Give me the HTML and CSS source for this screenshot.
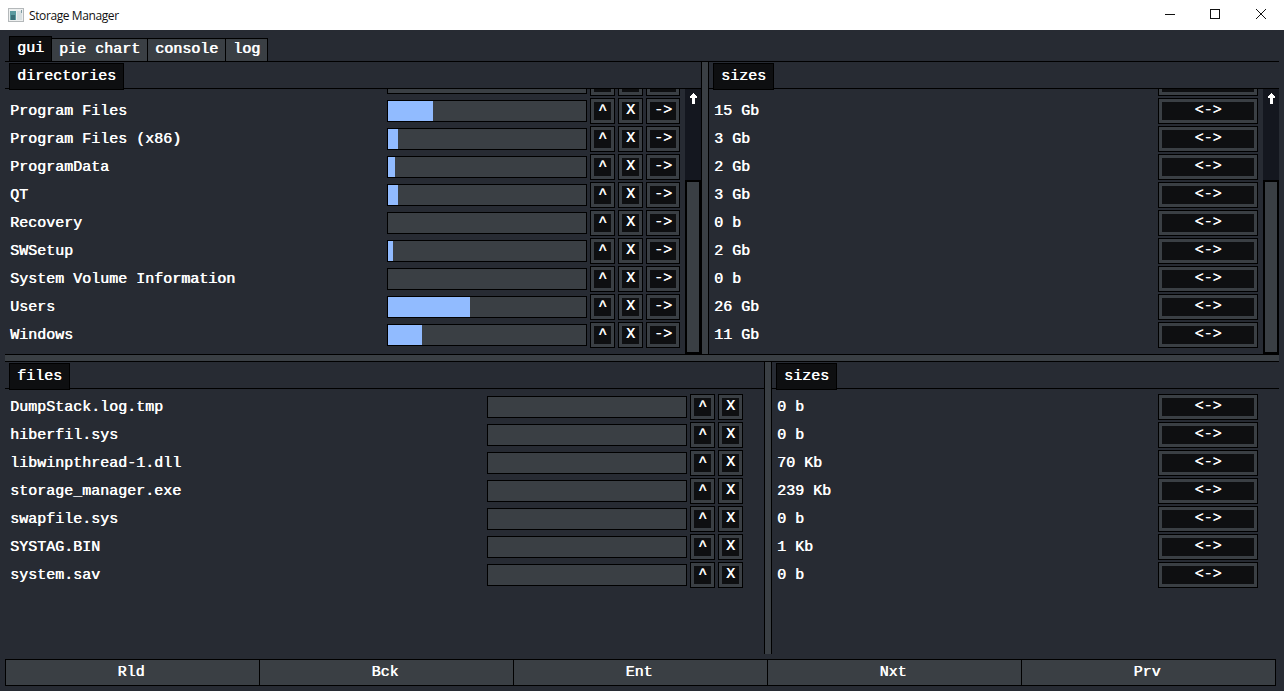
FILE: index.html
```html
<!DOCTYPE html>
<html lang="en">
<head>
<meta charset="UTF-8" />
<title>Storage Manager</title>
<link rel="stylesheet" href="styles.css">
</head>
<body>

<div class="titlebar">
  <svg class="app-icon" width="16" height="14" viewBox="0 0 16 14">
    <rect x="0.5" y="0.5" width="15" height="13" fill="#eef0f0" stroke="#b4b8ba"/>
    <rect x="2" y="3" width="6" height="9" fill="#5b9aa0"/>
    <rect x="3" y="7" width="4" height="5" fill="#3a6f78"/>
    <rect x="9" y="3" width="5" height="9" fill="#d8e0e2"/>
    <rect x="13" y="2" width="1" height="3" fill="#7f9ca2"/>
  </svg>
  <span class="title">Storage Manager</span>
  <div class="winctl">
    <svg width="46" height="30" viewBox="0 0 46 30"><path d="M19 14.5h10" stroke="#111" fill="none"/></svg>
    <svg width="46" height="30" viewBox="0 0 46 30"><rect x="18.5" y="9.5" width="9" height="9" stroke="#111" fill="none"/></svg>
    <svg width="46" height="30" viewBox="0 0 46 30"><path d="M18 9l10 10M28 9l-10 10" stroke="#111" fill="none"/></svg>
  </div>
</div>

<div class="app">
  <div class="tabbar">
    <div class="tab active">gui</div>
    <div class="tab">pie chart</div>
    <div class="tab">console</div>
    <div class="tab">log</div>
  </div>

  <div class="split">
    <div class="pane dirs">
      <div class="pane-head"><div class="pane-tab">directories</div></div>
      <div class="pane-body">
        <div class="list end">
          <div class="row"><span class="name">PerfLogs</span><div class="bar"></div><button class="btn">^</button><button class="btn">X</button><button class="btn wide">-&gt;</button></div>
          <div class="row"><span class="name">Program Files</span><div class="bar"><div class="fill" style="width:45px"></div></div><button class="btn">^</button><button class="btn">X</button><button class="btn wide">-&gt;</button></div>
          <div class="row"><span class="name">Program Files (x86)</span><div class="bar"><div class="fill" style="width:10px"></div></div><button class="btn">^</button><button class="btn">X</button><button class="btn wide">-&gt;</button></div>
          <div class="row"><span class="name">ProgramData</span><div class="bar"><div class="fill" style="width:7px"></div></div><button class="btn">^</button><button class="btn">X</button><button class="btn wide">-&gt;</button></div>
          <div class="row"><span class="name">QT</span><div class="bar"><div class="fill" style="width:10px"></div></div><button class="btn">^</button><button class="btn">X</button><button class="btn wide">-&gt;</button></div>
          <div class="row"><span class="name">Recovery</span><div class="bar"></div><button class="btn">^</button><button class="btn">X</button><button class="btn wide">-&gt;</button></div>
          <div class="row"><span class="name">SWSetup</span><div class="bar"><div class="fill" style="width:5px"></div></div><button class="btn">^</button><button class="btn">X</button><button class="btn wide">-&gt;</button></div>
          <div class="row"><span class="name">System Volume Information</span><div class="bar"></div><button class="btn">^</button><button class="btn">X</button><button class="btn wide">-&gt;</button></div>
          <div class="row"><span class="name">Users</span><div class="bar"><div class="fill" style="width:82px"></div></div><button class="btn">^</button><button class="btn">X</button><button class="btn wide">-&gt;</button></div>
          <div class="row"><span class="name">Windows</span><div class="bar"><div class="fill" style="width:34px"></div></div><button class="btn">^</button><button class="btn">X</button><button class="btn wide">-&gt;</button></div>
        </div>
        <div class="scrollbar">
          <svg class="arrow" width="7" height="11" viewBox="0 0 7 11"><path d="M3 0h1v1h1v1h1v1h1v2H5v6H2V5H0V3h1V2h1V1h1z" fill="#fff"/></svg>
          <div class="thumb"></div>
        </div>
      </div>
    </div>
    <div class="vsplit"></div>
    <div class="pane">
      <div class="pane-head"><div class="pane-tab">sizes</div></div>
      <div class="pane-body">
        <div class="list end">
          <div class="row"><span class="name">0 b</span><button class="btn swap">&lt;-&gt;</button></div>
          <div class="row"><span class="name">15 Gb</span><button class="btn swap">&lt;-&gt;</button></div>
          <div class="row"><span class="name">3 Gb</span><button class="btn swap">&lt;-&gt;</button></div>
          <div class="row"><span class="name">2 Gb</span><button class="btn swap">&lt;-&gt;</button></div>
          <div class="row"><span class="name">3 Gb</span><button class="btn swap">&lt;-&gt;</button></div>
          <div class="row"><span class="name">0 b</span><button class="btn swap">&lt;-&gt;</button></div>
          <div class="row"><span class="name">2 Gb</span><button class="btn swap">&lt;-&gt;</button></div>
          <div class="row"><span class="name">0 b</span><button class="btn swap">&lt;-&gt;</button></div>
          <div class="row"><span class="name">26 Gb</span><button class="btn swap">&lt;-&gt;</button></div>
          <div class="row"><span class="name">11 Gb</span><button class="btn swap">&lt;-&gt;</button></div>
        </div>
        <div class="scrollbar">
          <svg class="arrow" width="7" height="11" viewBox="0 0 7 11"><path d="M3 0h1v1h1v1h1v1h1v2H5v6H2V5H0V3h1V2h1V1h1z" fill="#fff"/></svg>
          <div class="thumb"></div>
        </div>
      </div>
    </div>
  </div>

  <div class="hsplit"></div>

  <div class="split">
    <div class="pane files">
      <div class="pane-head"><div class="pane-tab">files</div></div>
      <div class="pane-body">
        <div class="list start">
          <div class="row"><span class="name">DumpStack.log.tmp</span><div class="bar"></div><button class="btn">^</button><button class="btn">X</button></div>
          <div class="row"><span class="name">hiberfil.sys</span><div class="bar"></div><button class="btn">^</button><button class="btn">X</button></div>
          <div class="row"><span class="name">libwinpthread-1.dll</span><div class="bar"></div><button class="btn">^</button><button class="btn">X</button></div>
          <div class="row"><span class="name">storage_manager.exe</span><div class="bar"></div><button class="btn">^</button><button class="btn">X</button></div>
          <div class="row"><span class="name">swapfile.sys</span><div class="bar"></div><button class="btn">^</button><button class="btn">X</button></div>
          <div class="row"><span class="name">SYSTAG.BIN</span><div class="bar"></div><button class="btn">^</button><button class="btn">X</button></div>
          <div class="row"><span class="name">system.sav</span><div class="bar"></div><button class="btn">^</button><button class="btn">X</button></div>
        </div>
      </div>
    </div>
    <div class="vsplit"></div>
    <div class="pane">
      <div class="pane-head"><div class="pane-tab">sizes</div></div>
      <div class="pane-body">
        <div class="list start">
          <div class="row"><span class="name">0 b</span><button class="btn swap">&lt;-&gt;</button></div>
          <div class="row"><span class="name">0 b</span><button class="btn swap">&lt;-&gt;</button></div>
          <div class="row"><span class="name">70 Kb</span><button class="btn swap">&lt;-&gt;</button></div>
          <div class="row"><span class="name">239 Kb</span><button class="btn swap">&lt;-&gt;</button></div>
          <div class="row"><span class="name">0 b</span><button class="btn swap">&lt;-&gt;</button></div>
          <div class="row"><span class="name">1 Kb</span><button class="btn swap">&lt;-&gt;</button></div>
          <div class="row"><span class="name">0 b</span><button class="btn swap">&lt;-&gt;</button></div>
        </div>
      </div>
    </div>
  </div>

  <div class="footer">
    <button class="foot-btn">Rld</button>
    <button class="foot-btn">Bck</button>
    <button class="foot-btn">Ent</button>
    <button class="foot-btn">Nxt</button>
    <button class="foot-btn">Prv</button>
  </div>
</div>

</body>
</html>
```

FILE: styles.css
```css
* {
  box-sizing: border-box;
}

html, body {
  margin: 0;
  height: 100%;
  overflow: hidden;
}

body {
  background: #272b33;
  font-family: "Liberation Mono", monospace;
  font-size: 15px;
  font-weight: normal;
  color: #fff;
  /* engrossa os traços verticais, como a fonte bitmap */
  text-shadow: 0.6px 0 0 #fff;
}

/* Barra de titulo */
.titlebar {
  height: 30px;
  background: #fff;
  display: flex;
  align-items: center;
  padding-left: 8px;
  color: #111;
  text-shadow: none;
}

.app-icon {
  margin-right: 5px;
}

.title {
  font-family: "Open Sans", sans-serif;
  font-size: 12px;
  letter-spacing: -0.4px;
}

.winctl {
  margin-left: auto;
  display: flex;
}

.app {
  height: 661px;
  padding: 6px 5px 0;
  display: flex;
  flex-direction: column;
}

/* Abas */
.tabbar {
  height: 26px;
  flex: none;
  display: flex;
  align-items: flex-end;
  padding-left: 4px;
  border-bottom: 1px solid #000;
}

.tab {
  height: 24px;
  padding: 0 7px;
  margin-right: -1px;
  margin-bottom: -1px;
  background: #3a3f44;
  border: 1px solid #000;
  line-height: 22px;
}

.tab.active {
  height: 26px;
  background: #0e0f11;
  line-height: 24px;
}

.split {
  height: 292px;
  flex: none;
  display: flex;
}

.pane {
  flex: 1;
  min-width: 0;
  display: flex;
  flex-direction: column;
}

.dirs {
  flex: none;
  width: 696px;
}

.files {
  flex: none;
  width: 759px;
}

.pane-head {
  height: 27px;
  flex: none;
  padding: 1px 0 0 4px;
  border-bottom: 1px solid #000;
}

.pane-tab {
  position: relative;
  display: inline-block;
  height: 27px;
  padding: 0 7px;
  background: #0e0f11;
  border: 1px solid #000;
  line-height: 25px;
}

.pane-body {
  flex: 1;
  min-height: 0;
  display: flex;
}

.list {
  flex: 1;
  min-width: 0;
  overflow: hidden;
  display: flex;
  flex-direction: column;
  gap: 2px;
  padding-left: 5px;
  padding-right: 5px;
}

/* lista rolada: as linhas ficam presas embaixo */
.list.end {
  justify-content: flex-end;
  padding-bottom: 6px;
}

.list.start {
  justify-content: flex-start;
  padding-top: 5px;
  padding-right: 21px;
}

.row {
  height: 26px;
  flex: none;
  display: flex;
  align-items: center;
  gap: 3px;
}

.name {
  flex: 1;
  padding-top: 2px;
  white-space: pre;
  line-height: 26px;
}

.bar {
  width: 200px;
  height: 22px;
  flex: none;
  background: #3a3f44;
  border: 1px solid #000;
}

.fill {
  height: 100%;
  background: #91bbff;
}

.btn {
  width: 25px;
  height: 26px;
  flex: none;
  padding: 0 0 2px;
  background: #0e0f11;
  border: 1px solid #000;
  box-shadow: inset 0 0 0 3px #3a3f44;
  color: #fff;
  font: inherit;
  text-shadow: 0.6px 0 0 #fff;
}

.btn.wide {
  width: 34px;
}

.btn.swap {
  width: 100px;
}

.scrollbar {
  width: 16px;
  flex: none;
  background: #14171f;
  display: flex;
  flex-direction: column;
  align-items: center;
}

.arrow {
  margin-top: 4px;
}

.thumb {
  width: 16px;
  height: 174px;
  margin-top: auto;
  background: #3a3f44;
  border: 2px solid #000;
}

.vsplit {
  width: 8px;
  flex: none;
  background: #3a3f44;
  border-left: 1px solid #000;
  border-right: 1px solid #000;
}

.hsplit {
  height: 8px;
  flex: none;
  background: #3a3f44;
  border-top: 1px solid #000;
  border-bottom: 1px solid #000;
}

.footer {
  margin-top: 5px;
  display: flex;
  padding-right: 4px;
}

.foot-btn {
  width: 255px;
  height: 27px;
  margin-right: -1px;
  padding: 0 3px 0 0;
  background: #3a3f44;
  border: 1px solid #000;
  color: #fff;
  font: inherit;
  text-shadow: 0.6px 0 0 #fff;
}
```
